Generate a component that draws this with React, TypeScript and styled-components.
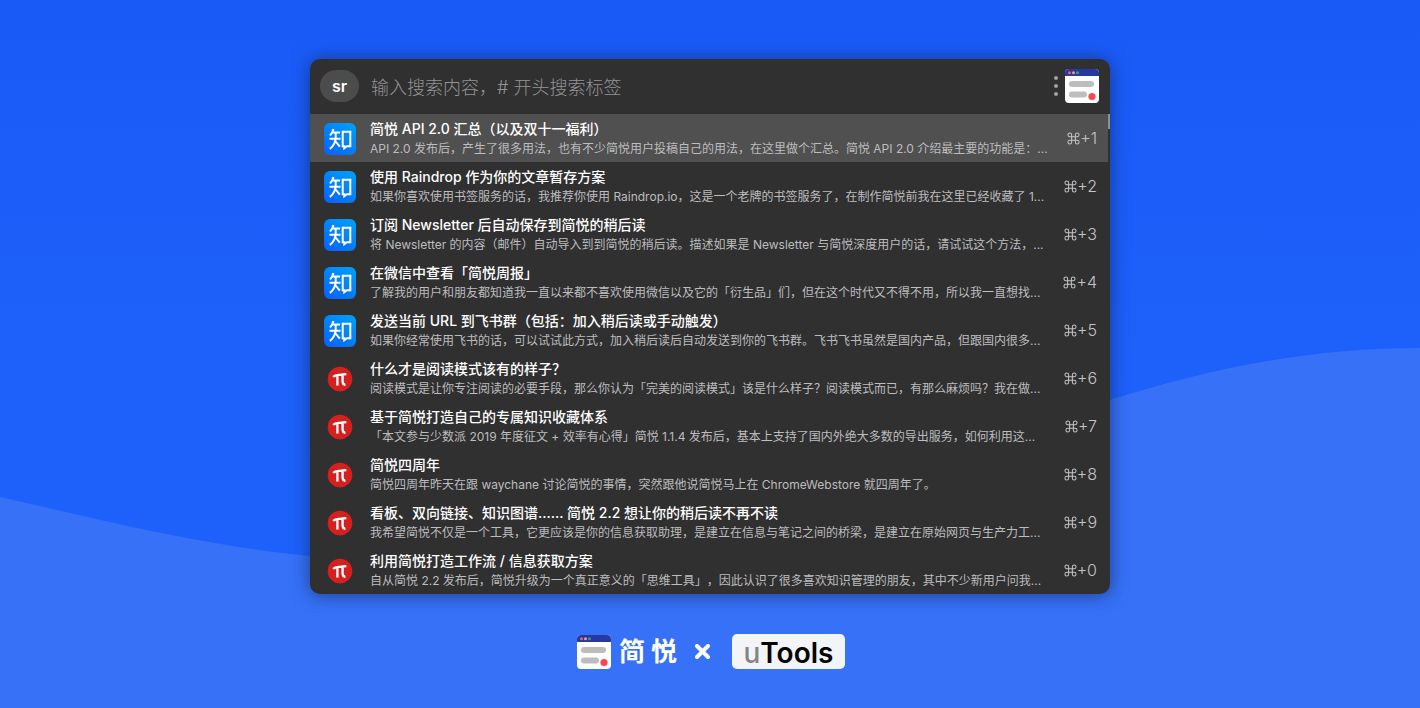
import React from "react";
import styled, { createGlobalStyle } from "styled-components";

const GlobalStyle = createGlobalStyle`
  *, *::before, *::after { box-sizing: border-box; }
  body {
    margin: 0;
    font-family: Inter, "Noto Sans CJK SC", sans-serif;
    text-spacing-trim: space-all;
    background: #3772f8;
  }
`;

const Page = styled.div`
  position: relative;
  min-height: 100vh;
  padding: 59px 24px 39px;
  display: flex;
  flex-direction: column;
  align-items: center;
  background: linear-gradient(#195af7, #1e60fa 50%, #1e62fb);
  overflow: hidden;
`;

const Wave = styled.svg`
  position: absolute;
  inset: 0;
  width: 100%;
  height: 100%;
`;

const Launcher = styled.main`
  position: relative;
  width: 100%;
  max-width: 800px;
  background: #303031;
  border-radius: 10px;
  box-shadow: 0 1px 18px rgba(20, 30, 60, 0.6);
`;

const SearchBar = styled.header`
  display: flex;
  align-items: center;
  height: 55px;
  padding: 0 11px 1px 10px;
`;

const Tag = styled.button`
  width: 39px;
  height: 32px;
  padding: 0;
  border: 0;
  border-radius: 16px;
  background: #4b4c4c;
  color: #fff;
  font: 600 16px/32px Inter, sans-serif;
`;

const SearchInput = styled.input`
  flex: 1;
  min-width: 0;
  height: 34px;
  margin-left: 12px;
  padding: 2px 0 0;
  border: 0;
  outline: 0;
  background: transparent;
  color: #fff;
  font: 300 18px/32px Inter, "Noto Sans CJK SC", sans-serif;
  &::placeholder { color: #939394; opacity: 1; }
`;

const MenuButton = styled.button`
  display: flex;
  padding: 0;
  margin-right: 6px;
  border: 0;
  background: none;
`;

const Results = styled.ul`
  position: relative;
  margin: 0;
  padding: 0;
  list-style: none;
`;

const Row = styled.li<{ $active?: boolean }>`
  display: flex;
  align-items: center;
  height: 48px;
  margin-right: 2px;
  padding: 0 11px 0 14px;
  background: ${(p) => (p.$active ? "#505051" : "transparent")};
`;

const ScrollThumb = styled.div`
  position: absolute;
  top: 0;
  right: 0;
  width: 2px;
  height: 15px;
  background: #8f8f90;
`;

const IconSlot = styled.div`
  flex: none;
  display: flex;
  justify-content: center;
  width: 32px;
  margin-right: 14px;
  padding-top: 2px;
`;

const Texts = styled.div`
  flex: 1;
  min-width: 0;
  padding-top: 2px;
`;

const Title = styled.h2`
  margin: 0;
  font-size: 14px;
  line-height: 20px;
  font-weight: 500;
  color: #fff;
  white-space: nowrap;
  overflow: hidden;
`;

const Summary = styled.p`
  margin: 0;
  font-size: 12px;
  line-height: 20px;
  color: #bdbdbe;
  white-space: nowrap;
  overflow: hidden;
`;

const Shortcut = styled.kbd`
  flex: none;
  width: 40px;
  font: 300 16px/20px Inter, "DejaVu Sans", sans-serif;
  color: #c4c4c5;
  display: flex;
  align-items: center;
  justify-content: flex-end;
`;

const Brands = styled.footer`
  position: relative;
  display: flex;
  align-items: center;
  margin-top: 40px;
  padding-left: 2px;
  color: #fff;
`;

const BrandName = styled.span`
  margin: 0 18px 0 8px;
  padding-bottom: 3px;
  font: 700 26px/32px "Noto Sans CJK SC", sans-serif;
`;

const UToolsLogo = styled.span`
  width: 113px;
  height: 35px;
  margin-left: 22px;
  border-radius: 5px;
  background: #f2f4f7;
  color: #050505;
  text-align: center;
  font: 600 28px/38px Inter, sans-serif;
`;

const LogoLetter = styled.span`
  color: #848486;
  font-weight: 500;
`;

const SimpReadLogo = () => (
  <svg width="34" height="34" viewBox="0 0 34 34" aria-hidden="true">
    <rect width="34" height="34" rx="4" fill="#fff" />
    <path d="M0 7V4a4 4 0 0 1 4-4h26a4 4 0 0 1 4 4v3z" fill="#2739a0" />
    <circle cx="4.500" cy="3.700" r="1.500" fill="#f0604f" />
    <circle cx="8.500" cy="3.700" r="1.500" fill="#f0a08a" />
    <circle cx="12.500" cy="3.700" r="1.500" fill="#3f9c72" />
    <rect x="4" y="12" width="25" height="6" rx="3" fill="#bdbdbe" />
    <rect x="4" y="22.500" width="18" height="6" rx="3" fill="#bdbdbe" />
    <circle cx="27" cy="27.500" r="3.600" fill="#fb4650" />
  </svg>
);

const ZhihuIcon = () => (
  <svg width="32" height="32" viewBox="0 0 32 32" aria-hidden="true">
    <defs>
      <linearGradient id="zhihu" x1="1" y1="0" x2="0.300" y2="1">
        <stop offset="0" stopColor="#00a2fb" />
        <stop offset="1" stopColor="#0568fa" />
      </linearGradient>
    </defs>
    <rect width="32" height="32" rx="6" fill="url(#zhihu)" />
    <g fill="none" stroke="#fff" strokeWidth="2">
      <path d="M9.500 6Q8.500 10 6 12.500M8.500 9.500H16M5.500 15.800H16.500M11.700 9.500V14Q11.500 22 5.800 25.800M11.700 18.500L15.800 23.700" />
      <path d="M18.700 8.700H26.300V23.300H22.800L20.300 25.200V23.300H18.700Z" />
    </g>
  </svg>
);

const PiIcon = () => (
  <svg width="26" height="26" viewBox="0 0 26 26" aria-hidden="true">
    <circle cx="13" cy="13" r="12.300" fill="#d6201f" />
    <path
      d="M6.300 11Q7.500 9.200 10 9.100L19.300 8.200M10.400 9.200V19.600M15.600 8.800V15.500Q15.600 18.500 18.400 19"
      fill="none"
      stroke="#fff"
      strokeWidth="2.300"
    />
  </svg>
);

const CommandIcon = () => (
  <svg width="13" height="13" viewBox="0 0 14 14" fill="none" stroke="currentColor" strokeWidth="1.100" aria-label="⌘">
    <path d="M5 5H9V9H5ZM5 5H3A2 2 0 1 1 5 3ZM9 5V3A2 2 0 1 1 11 5ZM9 9H11A2 2 0 1 1 9 11ZM5 9V11A2 2 0 1 1 3 9Z" />
  </svg>
);

type Item = { source: "zhihu" | "sspai"; title: string; summary: string };

const items: Item[] = [
  { source: "zhihu", title: "简悦 API 2.0 汇总（以及双十一福利）", summary: "API 2.0 发布后，产生了很多用法，也有不少简悦用户投稿自己的用法，在这里做个汇总。简悦 API 2.0 介绍最主要的功能是：..." },
  { source: "zhihu", title: "使用 Raindrop 作为你的文章暂存方案", summary: "如果你喜欢使用书签服务的话，我推荐你使用 Raindrop.io，这是一个老牌的书签服务了，在制作简悦前我在这里已经收藏了 1..." },
  { source: "zhihu", title: "订阅 Newsletter 后自动保存到简悦的稍后读", summary: "将 Newsletter 的内容（邮件）自动导入到到简悦的稍后读。描述如果是 Newsletter 与简悦深度用户的话，请试试这个方法，..." },
  { source: "zhihu", title: "在微信中查看「简悦周报」", summary: "了解我的用户和朋友都知道我一直以来都不喜欢使用微信以及它的「衍生品」们，但在这个时代又不得不用，所以我一直想找..." },
  { source: "zhihu", title: "发送当前 URL 到飞书群（包括：加入稍后读或手动触发）", summary: "如果你经常使用飞书的话，可以试试此方式，加入稍后读后自动发送到你的飞书群。飞书飞书虽然是国内产品，但跟国内很多..." },
  { source: "sspai", title: "什么才是阅读模式该有的样子？", summary: "阅读模式是让你专注阅读的必要手段，那么你认为「完美的阅读模式」该是什么样子？阅读模式而已，有那么麻烦吗？我在做..." },
  { source: "sspai", title: "基于简悦打造自己的专属知识收藏体系", summary: "「本文参与少数派 2019 年度征文 + 效率有心得」简悦 1.1.4 发布后，基本上支持了国内外绝大多数的导出服务，如何利用这..." },
  { source: "sspai", title: "简悦四周年", summary: "简悦四周年昨天在跟 waychane 讨论简悦的事情，突然跟他说简悦马上在 ChromeWebstore 就四周年了。" },
  { source: "sspai", title: "看板、双向链接、知识图谱...... 简悦 2.2 想让你的稍后读不再不读", summary: "我希望简悦不仅是一个工具，它更应该是你的信息获取助理，是建立在信息与笔记之间的桥梁，是建立在原始网页与生产力工..." },
  { source: "sspai", title: "利用简悦打造工作流 / 信息获取方案", summary: "自从简悦 2.2 发布后，简悦升级为一个真正意义的「思维工具」，因此认识了很多喜欢知识管理的朋友，其中不少新用户问我..." },
];

export default function App() {
  return (
    <Page lang="zh-CN">
      <GlobalStyle />
      <Wave viewBox="0 0 1420 708" preserveAspectRatio="none" aria-hidden="true">
        <path d="M0 497C110 522 200 545 310 556C620 590 830 485 1110 400C1210 368 1310 348 1420 348V708H0Z" fill="#3671f8" />
      </Wave>
      <Launcher>
        <SearchBar>
          <Tag type="button">sr</Tag>
          <SearchInput type="text" aria-label="搜索" placeholder="输入搜索内容，# 开头搜索标签" />
          <MenuButton type="button" aria-label="菜单">
            <svg width="6" height="22" viewBox="0 0 6 22" fill="#a2a2a3">
              <circle cx="3" cy="3" r="2" />
              <circle cx="3" cy="11" r="2" />
              <circle cx="3" cy="19" r="2" />
            </svg>
          </MenuButton>
          <SimpReadLogo />
        </SearchBar>
        <Results>
          {items.map((item, i) => (
            <Row key={item.title} $active={i === 0}>
              <IconSlot>{item.source === "zhihu" ? <ZhihuIcon /> : <PiIcon />}</IconSlot>
              <Texts>
                <Title>{item.title}</Title>
                <Summary>{item.summary}</Summary>
              </Texts>
              <Shortcut>
                <CommandIcon />+{(i + 1) % 10}
              </Shortcut>
            </Row>
          ))}
          <ScrollThumb />
        </Results>
      </Launcher>
      <Brands>
        <SimpReadLogo />
        <BrandName>简 悦</BrandName>
        <svg width="15" height="15" viewBox="0 0 15 15" aria-label="×">
          <path d="M2 2L13 13M13 2L2 13" stroke="#fff" strokeWidth="4" strokeLinecap="round" />
        </svg>
        <UToolsLogo>
          <LogoLetter>u</LogoLetter>Tools
        </UToolsLogo>
      </Brands>
    </Page>
  );
}
